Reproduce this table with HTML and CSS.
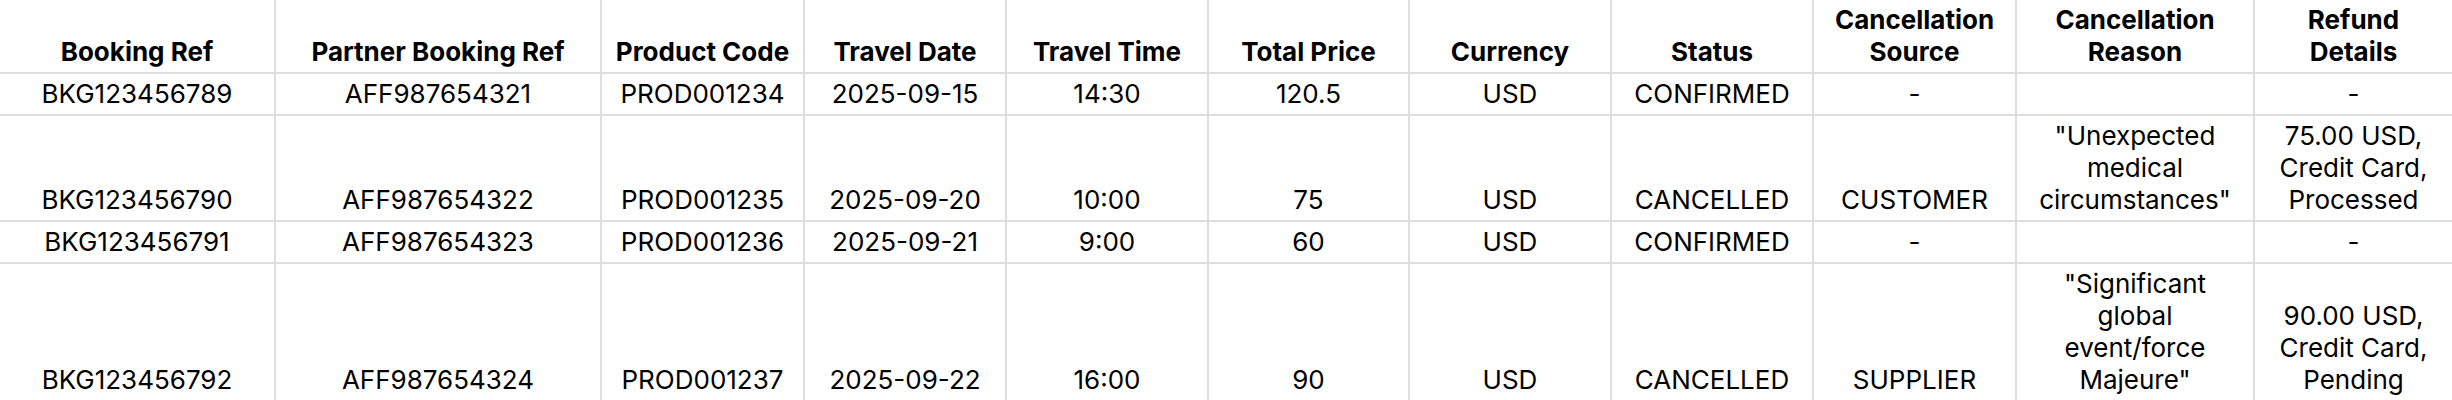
FILE: index.html
```html
<!DOCTYPE html>
<html lang="en">
<head>
<meta charset="utf-8">
<title>Bookings</title>
<link rel="stylesheet" href="styles.css">
</head>
<body>
<table class="grid">
  <colgroup>
    <col class="c-ref">
    <col class="c-partner">
    <col class="c-203">
    <col class="c-202">
    <col class="c-202">
    <col class="c-201">
    <col class="c-202">
    <col class="c-202">
    <col class="c-203">
    <col class="c-reason">
    <col class="c-refund">
  </colgroup>
  <thead>
    <tr>
      <th>Booking Ref</th>
      <th>Partner Booking Ref</th>
      <th>Product Code</th>
      <th>Travel Date</th>
      <th>Travel Time</th>
      <th>Total Price</th>
      <th>Currency</th>
      <th>Status</th>
      <th>Cancellation Source</th>
      <th>Cancellation Reason</th>
      <th>Refund Details</th>
    </tr>
  </thead>
  <tbody>
    <tr>
      <td>BKG123456789</td>
      <td>AFF987654321</td>
      <td>PROD001234</td>
      <td>2025-09-15</td>
      <td>14:30</td>
      <td>120.5</td>
      <td>USD</td>
      <td>CONFIRMED</td>
      <td>-</td>
      <td></td>
      <td>-</td>
    </tr>
    <tr>
      <td>BKG123456790</td>
      <td>AFF987654322</td>
      <td>PROD001235</td>
      <td>2025-09-20</td>
      <td>10:00</td>
      <td>75</td>
      <td>USD</td>
      <td>CANCELLED</td>
      <td>CUSTOMER</td>
      <td>"Unexpected medical circumstances"</td>
      <td>75.00 USD, Credit Card, Processed</td>
    </tr>
    <tr>
      <td>BKG123456791</td>
      <td>AFF987654323</td>
      <td>PROD001236</td>
      <td>2025-09-21</td>
      <td>9:00</td>
      <td>60</td>
      <td>USD</td>
      <td>CONFIRMED</td>
      <td>-</td>
      <td></td>
      <td>-</td>
    </tr>
    <tr>
      <td>BKG123456792</td>
      <td>AFF987654324</td>
      <td>PROD001237</td>
      <td>2025-09-22</td>
      <td>16:00</td>
      <td>90</td>
      <td>USD</td>
      <td>CANCELLED</td>
      <td>SUPPLIER</td>
      <td>"Significant global event/force Majeure"</td>
      <td>90.00 USD, Credit Card, Pending</td>
    </tr>
  </tbody>
</table>
</body>
</html>
```

FILE: styles.css
```css
html, body {
  margin: 0;
  padding: 0;
  background: #fff;
  overflow: hidden;
}

body {
  font-family: Inter, "Liberation Sans", sans-serif;
  font-size: 26px;
  line-height: 32px;
  color: #000;
}

.grid {
  border-collapse: separate;
  border-spacing: 0;
  table-layout: fixed;
  width: 2452px;
}

.c-ref { width: 276px; }
.c-partner { width: 326px; }
.c-203 { width: 203px; }
.c-202 { width: 202px; }
.c-201 { width: 201px; }
.c-reason { width: 238px; }
.c-refund { width: 197px; }

.grid th,
.grid td {
  padding: 4px 12px;
  text-align: center;
  vertical-align: bottom;
  border-right: 2px solid #dedede;
  border-bottom: 2px solid #dedede;
}

.grid th {
  font-weight: 700;
}

.grid th:last-child,
.grid td:last-child {
  border-right: none;
}
```
